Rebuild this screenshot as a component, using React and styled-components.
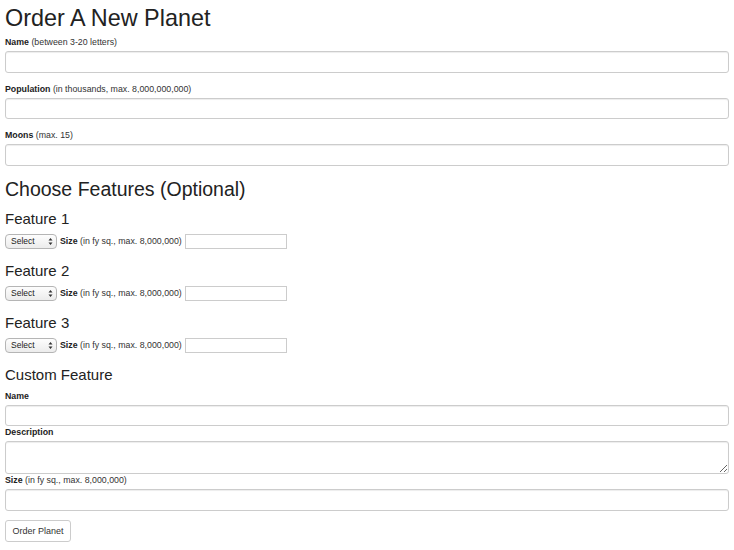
import React from 'react';
import styled, { createGlobalStyle } from 'styled-components';

const GlobalStyle = createGlobalStyle`
    * { box-sizing: border-box; }
    body {
        margin: 0;
        background: #fff;
        color: #333;
        font-family: "Liberation Sans", Arial, Helvetica, sans-serif;
    }
`;

const Page = styled.form`
    padding: 0 5px;
`;

const Title = styled.h1`
    margin: 5px 0 5px;
    font-size: 23.4px;
    line-height: 26px;
    font-weight: normal;
    color: #222;
`;

const Heading = styled.h2`
    margin: 13.5px 0 10.5px;
    font-size: 19.5px;
    line-height: 21.5px;
    font-weight: normal;
    color: #222;
`;

const SubHeading = styled.h3`
    margin: 0 0 ${p => p.$gap || 6}px;
    font-size: 15px;
    line-height: 16.5px;
    font-weight: normal;
    color: #222;
`;

const Group = styled.div`
    margin-bottom: ${p => p.$space ?? 10}px;
`;

const Label = styled.label`
    display: block;
    font-size: 8.8px;
    line-height: 13px;
    margin-bottom: 2px;
    color: #333;

    b { font-weight: bold; color: #222; }
`;

const TextInput = styled.input`
    display: block;
    width: 100%;
    height: 21.5px;
    padding: 3px 6px;
    font: 9px "Liberation Sans", Arial, sans-serif;
    border: 1px solid #ccc;
    border-radius: 3px;
    background: #fff;
    box-shadow: inset 0 1px 1px rgba(0, 0, 0, 0.075);
    outline: none;
`;

const TextArea = styled.textarea`
    display: block;
    width: 100%;
    height: 33px;
    padding: 3px 6px;
    font: 9px "Liberation Sans", Arial, sans-serif;
    border: 1px solid #ccc;
    border-radius: 3px;
    box-shadow: inset 0 1px 1px rgba(0, 0, 0, 0.075);
    outline: none;
`;

const Feature = styled.div`
    margin-bottom: 14.5px;
`;

const FeatureRow = styled.div`
    display: flex;
    align-items: center;
    gap: 3px;
    height: 15px;
    font-size: 8.8px;
    color: #333;

    b { font-weight: bold; color: #222; }
`;

const SelectWrap = styled.span`
    position: relative;
    display: inline-block;
    width: 52px;
    height: 15px;
`;

const Select = styled.select`
    appearance: none;
    width: 100%;
    height: 100%;
    padding: 0 0 0 5px;
    margin: 0;
    font: 8.5px "Liberation Sans", Arial, sans-serif;
    color: #222;
    border: 1px solid #b5b5b5;
    border-radius: 4px;
    background: linear-gradient(#fdfdfd, #ececec);
    outline: none;
`;

const Arrows = styled.svg`
    position: absolute;
    right: 4px;
    top: 3px;
    pointer-events: none;
`;

const SmallInput = styled.input`
    width: 102px;
    height: 15px;
    padding: 1px 3px;
    border: 1px solid #ccc;
    background: #fff;
    font: 9px "Liberation Sans", Arial, sans-serif;
    outline: none;
`;

const Button = styled.button`
    margin-top: 9px;
    width: 66px;
    height: 22px;
    padding: 0;
    font: 9px "Liberation Sans", Arial, sans-serif;
    color: #333;
    background: #fff;
    border: 1px solid #ccc;
    border-radius: 3px;
`;

function FeatureBlock({ index }) {
    return (
        <Feature>
            <SubHeading>Feature {index}</SubHeading>
            <FeatureRow>
                <SelectWrap>
                    <Select defaultValue="">
                        <option value="">Select</option>
                    </Select>
                    <Arrows width="5" height="9" viewBox="0 0 5 9">
                        <path d="M0.5 3.5 L2.5 1 L4.5 3.5 Z M0.5 5.5 L2.5 8 L4.5 5.5 Z" fill="#333" />
                    </Arrows>
                </SelectWrap>
                <span><b>Size</b> (in fy sq., max. 8,000,000)</span>
                <SmallInput type="text" />
            </FeatureRow>
        </Feature>
    );
}

export default function App() {
    return (
        <>
            <GlobalStyle />
            <Page onSubmit={e => e.preventDefault()}>
                <Title>Order A New Planet</Title>

                <Group>
                    <Label><b>Name</b> (between 3-20 letters)</Label>
                    <TextInput type="text" />
                </Group>
                <Group>
                    <Label><b>Population</b> (in thousands, max. 8,000,000,000)</Label>
                    <TextInput type="text" />
                </Group>
                <Group $space={0}>
                    <Label><b>Moons</b> (max. 15)</Label>
                    <TextInput type="text" />
                </Group>

                <Heading>Choose Features (Optional)</Heading>
                {[1, 2, 3].map(i => <FeatureBlock key={i} index={i} />)}

                <SubHeading>Custom Feature</SubHeading>
                <Label><b>Name</b></Label>
                <TextInput type="text" />
                <Label><b>Description</b></Label>
                <TextArea />
                <Label><b>Size</b> (in fy sq., max. 8,000,000)</Label>
                <TextInput type="text" />

                <Button type="submit">Order Planet</Button>
            </Page>
        </>
    );
}
